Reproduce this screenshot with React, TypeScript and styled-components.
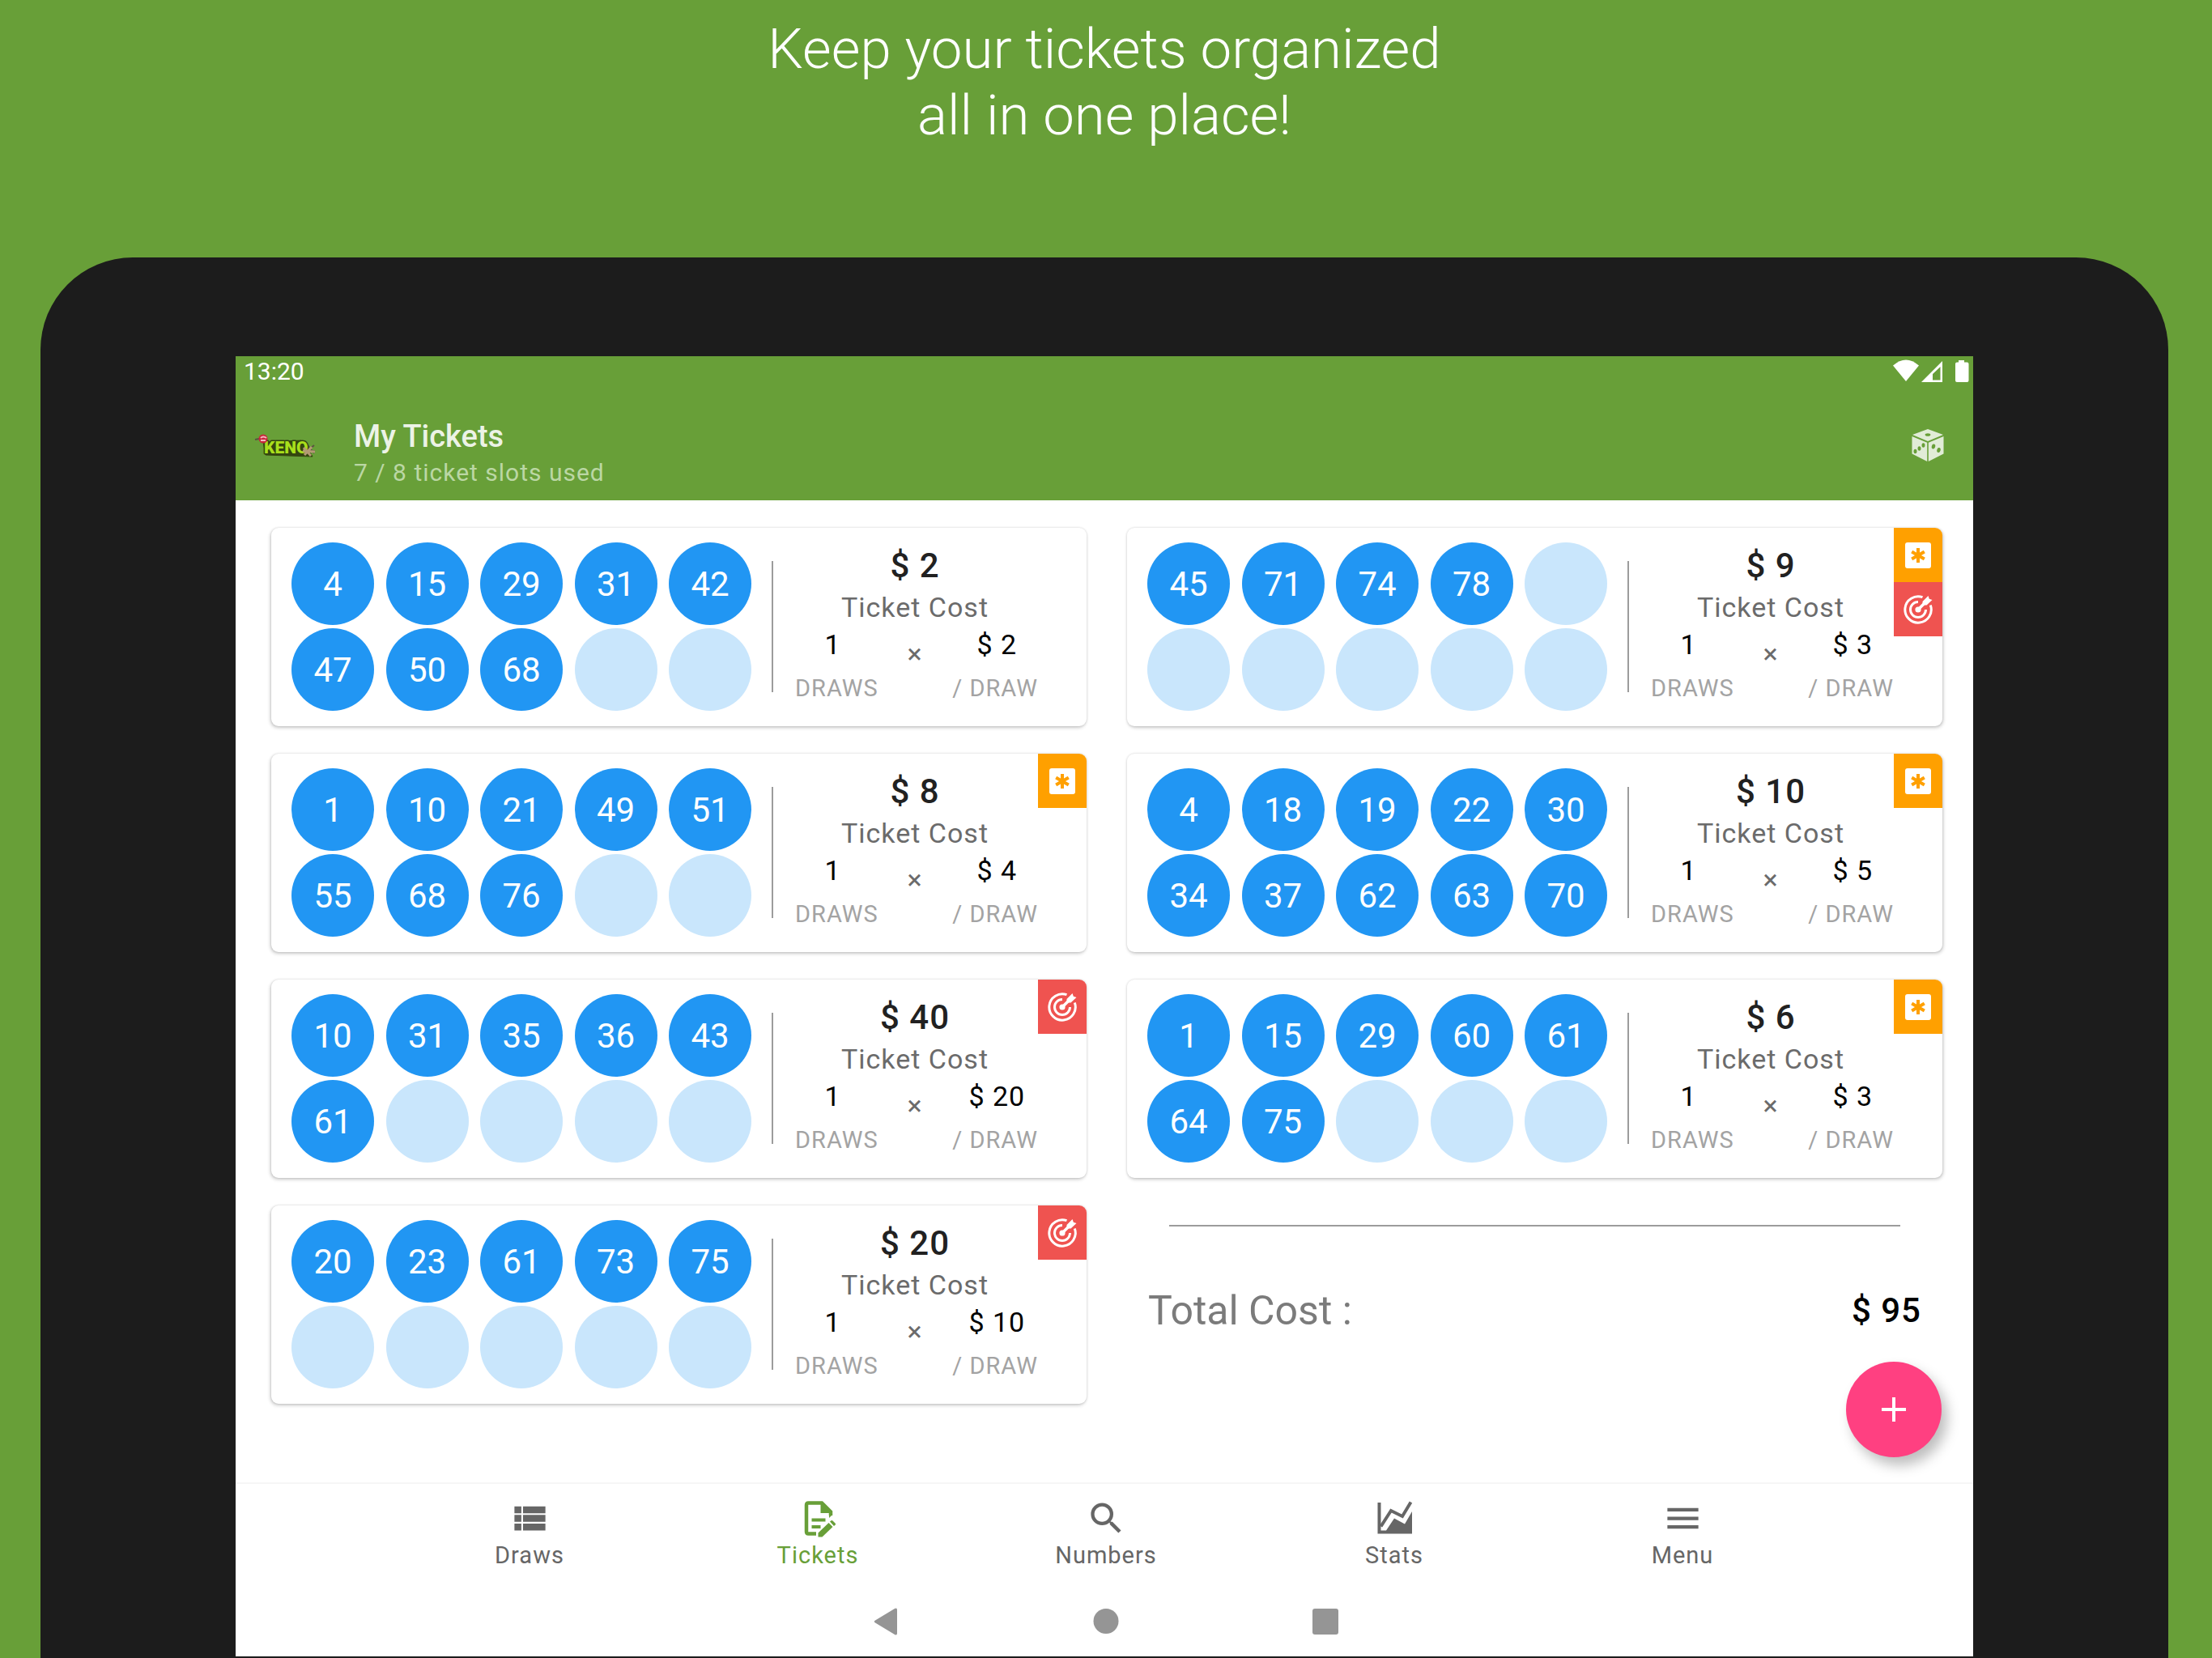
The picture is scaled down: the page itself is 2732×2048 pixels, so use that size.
import React from "react";
import styled, { createGlobalStyle } from "styled-components";
import { MdViewList, MdSearch, MdMenu } from "react-icons/md";

const GlobalStyle = createGlobalStyle`
  * { box-sizing: border-box; }
  body { margin: 0; background: #689f38; font-family: Roboto, "Noto Sans", sans-serif; }
  h1, h2, p, ul { margin: 0; padding: 0; font-weight: inherit; }
  button { border: 0; padding: 0; background: none; font: inherit; color: inherit; }
  svg { display: block; }
`;

const Page = styled.div`
  min-height: 100vh;
  display: flex;
  flex-direction: column;
  background: #689f38;
`;

const Headline = styled.h1`
  height: 318px;
  padding: 20px 54px 0 50px;
  text-align: center;
  color: #fff;
  font-size: 69px;
  font-weight: 300;
  line-height: 82px;
`;

const Tablet = styled.div`
  flex: 1;
  display: flex;
  margin: 0 54px 0 50px;
  padding: 122px 241px 2px;
  border-radius: 114px 114px 0 0;
  background: #1c1c1c;
`;

const Screen = styled.div`
  flex: 1;
  display: flex;
  flex-direction: column;
  background: #fff;
`;

const Header = styled.header`
  background: #689f38;
  color: #fff;
`;

const StatusBar = styled.div`
  display: flex;
  align-items: center;
  justify-content: space-between;
  height: 46px;
  padding: 0 4px 8px 10px;
  font-size: 30px;
  line-height: 38px;
`;

const Toolbar = styled.div`
  display: flex;
  align-items: center;
  height: 132px;
  padding: 0 36px 4px 21px;
`;

const Titles = styled.div`
  flex: 1;
  padding: 20px 0 0 45px;
  display: grid;
  gap: 2px;
`;

const Title = styled.h2`
  color: #ecf3e6;
  font-size: 38px;
  font-weight: 500;
  line-height: 46px;
`;

const Subtitle = styled.p`
  color: #bbd7a4;
  font-size: 30px;
  line-height: 40px;
  letter-spacing: 1px;
`;

const Main = styled.main`
  flex: 1;
  position: relative;
  padding: 34px 38px 0 44px;
`;

const Tickets = styled.div`
  display: grid;
  grid-template-columns: 1fr 1fr;
  gap: 34px 50px;
`;

const Card = styled.article`
  position: relative;
  display: flex;
  align-items: flex-start;
  height: 245px;
  padding: 18px 0 0 25px;
  border-radius: 9px;
  background: #fff;
  box-shadow: 0 0 3px rgba(0, 0, 0, 0.14), -1px 2px 4px rgba(0, 0, 0, 0.2);

  &:nth-child(even) {
    box-shadow: 0 0 3px rgba(0, 0, 0, 0.14), 1px 2px 4px rgba(0, 0, 0, 0.2);
  }
`;

const Numbers = styled.ul`
  display: grid;
  grid-template-columns: repeat(5, 102px);
  justify-content: space-between;
  row-gap: 4px;
  width: 568px;
  list-style: none;
`;

const Ball = styled.li<{ $empty: boolean }>`
  display: flex;
  align-items: center;
  justify-content: center;
  height: 102px;
  padding-top: 2px;
  border-radius: 50%;
  background: ${(p) => (p.$empty ? "#c9e6fc" : "#2196f3")};
  color: #fff;
  font-size: 42px;
  line-height: 50px;
`;

const Divider = styled.div`
  width: 2px;
  height: 162px;
  margin: 23px 25px 0;
  background: #9c9c9c;
`;

const Details = styled.div`
  flex: 1;
  padding: 2px 62px 0 0;
  text-align: center;
`;

const Cost = styled.p`
  color: #212121;
  font-size: 42px;
  font-weight: 500;
  line-height: 54px;
  letter-spacing: 1px;
`;

const CostLabel = styled.p`
  color: #6b6b6b;
  font-size: 34px;
  line-height: 48px;
  letter-spacing: 1px;
`;

const Values = styled.div`
  display: grid;
  grid-template-columns: repeat(3, 1fr);
  column-gap: 4px;
  color: #000;
  font-size: 34px;
  line-height: 44px;
  letter-spacing: 1px;
`;

const Times = styled.span`
  color: #6b6b6b;
  line-height: 66px;
`;

const Units = styled.div`
  display: flex;
  justify-content: space-between;
  margin: 0 -2px 0 2px;
  color: #a3a3a3;
  font-size: 29px;
  line-height: 20px;
  letter-spacing: 1px;
`;

const Badges = styled.div`
  position: absolute;
  top: 0;
  right: 0;
  overflow: hidden;
  border-top-right-radius: 9px;
`;

const Badge = styled.div<{ $color: string }>`
  display: flex;
  align-items: center;
  justify-content: center;
  width: 60px;
  height: 67px;
  background: ${(p) => p.$color};
`;

const Total = styled.section`
  padding: 24px 26px 0 26px;
`;

const TotalRule = styled.div`
  height: 2px;
  margin: 0 26px;
  background: #9c9c9c;
`;

const TotalRow = styled.div`
  display: flex;
  align-items: center;
  justify-content: space-between;
  padding-top: 72px;
  line-height: 64px;
`;

const TotalLabel = styled.span`
  color: #7b7b7b;
  font-size: 50px;
`;

const TotalValue = styled.span`
  color: #000;
  font-size: 42px;
  font-weight: 500;
  letter-spacing: 1px;
`;

const AddButton = styled.button`
  position: absolute;
  right: 39px;
  bottom: 31px;
  display: grid;
  place-items: center;
  width: 118px;
  height: 118px;
  border-radius: 50%;
  background: #ff4081;
  box-shadow: 7px 10px 16px rgba(0, 0, 0, 0.26);
`;

const BottomNav = styled.nav`
  display: flex;
  justify-content: center;
  padding: 17px 0 0 4px;
  border-top: 2px solid #f6f6f6;
`;

const NavLink = styled.a<{ $active: boolean }>`
  display: flex;
  flex-direction: column;
  align-items: center;
  flex: 0 1 356px;
  color: ${(p) => (p.$active ? "#689f38" : "#666")};
  font-size: 29px;
  line-height: 40px;
  letter-spacing: 1px;
  text-decoration: none;
`;

const SystemNav = styled.nav`
  display: flex;
  justify-content: center;
  gap: 220px;
  padding: 36px 0 18px 2px;
`;

const AsteriskIcon = () => (
  <svg width="32" height="32" viewBox="0 0 32 32" aria-hidden="true">
    <rect width="32" height="32" rx="3" fill="#fff" />
    <path d="M16 7v18M8.2 11.5l15.600 9M23.800 11.500l-15.600 9" stroke="#ffa000" strokeWidth="4" />
  </svg>
);

const TargetIcon = () => (
  <svg width="36" height="36" viewBox="0 0 36 36" fill="none" aria-hidden="true">
    <g stroke="#fff" strokeWidth="3">
      <path d="M23.500 2.700A16.200 16.200 0 1 0 33.300 12.500" />
      <path d="M18 8.500A9.500 9.500 0 1 0 27.500 18" />
      <path d="M18 18L28 8" strokeWidth="3.600" />
    </g>
    <circle cx="18" cy="18" r="3.600" fill="#fff" />
    <path d="M23.500 12.500V8L30.500 1l1.300 3.700 3.700 1.300-7 6.500z" fill="#fff" />
  </svg>
);

const TicketIcon = () => (
  <svg width="51" height="51" viewBox="0 0 51 51" fill="none" aria-hidden="true">
    <path
      d="M23 44.500H13.500Q11 44.500 11 42V9Q11 6.500 13.500 6.500H30L41 17.500V22"
      stroke="currentColor"
      strokeWidth="4.500"
    />
    <path d="M28.500 5H31L43 17.500V19H28.500z" fill="currentColor" />
    <path d="M43 17v4l-4 4v-7z" fill="currentColor" />
    <path d="M17.500 27.500h17M17.500 36h11" stroke="currentColor" strokeWidth="4" />
    <path d="M25.500 48.500v-5L38.500 31l5 5-13 12.500z" fill="currentColor" />
    <path d="M40 29.500l1.500-1.200q1-.6 2 .2l3 3q1 1 .2 2L45 35z" fill="currentColor" />
  </svg>
);

const StatsIcon = () => (
  <svg width="51" height="51" viewBox="0 0 51 51" fill="none" aria-hidden="true">
    <path
      d="M4.500 6H8.500V40.500H15L25 25.500L38 32.500L47 17V44.500H4.500z"
      fill="currentColor"
    />
    <path d="M8.500 35.500L21 16L35 23L45.500 5.500" stroke="currentColor" strokeWidth="4" />
  </svg>
);

const KenoLogo = () => (
  <svg width="80" height="34" viewBox="0 0 80 34" role="img" aria-label="Keno">
    <path d="M3 10l10-2M66 25l10-8M68 17l8 10M63 23l14 1" stroke="#5a5342" strokeWidth="2" />
    <path
      d="M13 13L60 11L66 17L74 31L16 29z"
      fill="#34460f"
      stroke="#34460f"
      strokeWidth="1"
      strokeLinejoin="round"
    />
    <text
      x="14"
      y="27"
      fontFamily="Roboto, sans-serif"
      fontSize="21"
      fontWeight="900"
      fill="#a8df1c"
      stroke="#34460f"
      strokeWidth="3"
      paintOrder="stroke"
      strokeLinejoin="round"
    >
      KENO
    </text>
    <path d="M63 20l9 10M73 19l-9 10M62 24l15 1" stroke="#b39a74" strokeWidth="3" />
    <circle cx="13" cy="9" r="5.500" fill="#c8283c" />
    <path d="M10 8q3-3 7 0M10 11h6" stroke="#f3b9bf" strokeWidth="2" fill="none" />
  </svg>
);

const DiceIcon = () => (
  <svg width="40" height="40" viewBox="0 0 40 40" aria-hidden="true">
    <g fill="#e1ecd7">
      <path d="M20 0L39 7L20 15L1 7z" />
      <path d="M0.500 9L19.200 16.800V40L0.500 30.500z" />
      <path d="M39.500 9L20.800 16.800V40L39.500 30.500z" />
    </g>
    <g fill="#689f38">
      <ellipse cx="20" cy="7" rx="3.400" ry="1.800" />
      <ellipse cx="4.500" cy="27.500" rx="2" ry="2.800" />
      <ellipse cx="9.500" cy="24" rx="2" ry="2.800" />
      <ellipse cx="14.500" cy="20" rx="2" ry="2.800" />
      <ellipse cx="27" cy="21.500" rx="2.200" ry="3" transform="rotate(15 27 21.500)" />
      <ellipse cx="33.500" cy="26" rx="2.200" ry="3" transform="rotate(15 33.500 26)" />
    </g>
  </svg>
);

const StatusIcons = () => (
  <svg width="95" height="30" viewBox="0 1 95 30" fill="#fff" aria-hidden="true">
    <path d="M0 8.500Q16-5.500 32 8.500L16 28z" />
    <path fillRule="evenodd" d="M35 29L61 3V29zM49 26.500H58.500V10L49 19z" />
    <path d="M81 2h7v2.500h3.500q2 0 2 2V27q0 2-2 2H79q-2 0-2-2V6.500q0-2 2-2h2z" />
  </svg>
);

type Extra = "bonus" | "bullseye";

interface Ticket {
  numbers: number[];
  cost: number;
  perDraw: number;
  extras: Extra[];
}

const tickets: Ticket[] = [
  { numbers: [4, 15, 29, 31, 42, 47, 50, 68], cost: 2, perDraw: 2, extras: [] },
  { numbers: [45, 71, 74, 78], cost: 9, perDraw: 3, extras: ["bonus", "bullseye"] },
  { numbers: [1, 10, 21, 49, 51, 55, 68, 76], cost: 8, perDraw: 4, extras: ["bonus"] },
  { numbers: [4, 18, 19, 22, 30, 34, 37, 62, 63, 70], cost: 10, perDraw: 5, extras: ["bonus"] },
  { numbers: [10, 31, 35, 36, 43, 61], cost: 40, perDraw: 20, extras: ["bullseye"] },
  { numbers: [1, 15, 29, 60, 61, 64, 75], cost: 6, perDraw: 3, extras: ["bonus"] },
  { numbers: [20, 23, 61, 73, 75], cost: 20, perDraw: 10, extras: ["bullseye"] },
];

const SLOTS = Array.from({ length: 10 }, (_, i) => i);

const TicketCard = ({ ticket }: { ticket: Ticket }) => (
  <Card>
    <Numbers>
      {SLOTS.map((i) => (
        <Ball key={i} $empty={i >= ticket.numbers.length}>
          {ticket.numbers[i]}
        </Ball>
      ))}
    </Numbers>
    <Divider />
    <Details>
      <Cost>$ {ticket.cost}</Cost>
      <CostLabel>Ticket Cost</CostLabel>
      <Values>
        <span>1</span>
        <Times>×</Times>
        <span>$ {ticket.perDraw}</span>
      </Values>
      <Units>
        <span>DRAWS</span>
        <span>/ DRAW</span>
      </Units>
    </Details>
    <Badges>
      {ticket.extras.map((extra) => (
        <Badge key={extra} $color={extra === "bonus" ? "#ffa000" : "#ef5350"}>
          {extra === "bonus" ? <AsteriskIcon /> : <TargetIcon />}
        </Badge>
      ))}
    </Badges>
  </Card>
);

const navItems = [
  { label: "Draws", icon: <MdViewList size={51} /> },
  { label: "Tickets", icon: <TicketIcon /> },
  { label: "Numbers", icon: <MdSearch size={51} /> },
  { label: "Stats", icon: <StatsIcon /> },
  { label: "Menu", icon: <MdMenu size={51} /> },
];

const systemShapes = [
  { label: "Back", shape: <path d="M12 24.500q-2.500 1.500 0 3l24 14.500q3 1.500 3-1.500v-29q0-3-3-1.500z" /> },
  { label: "Home", shape: <circle cx="26" cy="25.500" r="15.500" /> },
  { label: "Recent apps", shape: <rect x="10" y="10" width="32" height="32" rx="3" /> },
];

export default function App() {
  return (
    <Page>
      <GlobalStyle />
      <Headline>
        Keep your tickets organized
        <br />
        all in one place!
      </Headline>
      <Tablet>
        <Screen>
          <Header>
            <StatusBar>
              <span>13:20</span>
              <StatusIcons />
            </StatusBar>
            <Toolbar>
              <KenoLogo />
              <Titles>
                <Title>My Tickets</Title>
                <Subtitle>7 / 8 ticket slots used</Subtitle>
              </Titles>
              <button type="button" aria-label="Quick pick">
                <DiceIcon />
              </button>
            </Toolbar>
          </Header>
          <Main>
            <Tickets>
              {tickets.map((ticket, i) => (
                <TicketCard key={i} ticket={ticket} />
              ))}
              <Total>
                <TotalRule />
                <TotalRow>
                  <TotalLabel>Total Cost :</TotalLabel>
                  <TotalValue>$ 95</TotalValue>
                </TotalRow>
              </Total>
            </Tickets>
            <AddButton type="button" aria-label="Add ticket">
              <svg width="30" height="30" viewBox="0 0 30 30" aria-hidden="true">
                <path d="M15 0v30M0 15h30" stroke="#fff" strokeWidth="4" />
              </svg>
            </AddButton>
          </Main>
          <BottomNav>
            {navItems.map(({ label, icon }) => (
              <NavLink key={label} href="#" $active={label === "Tickets"}>
                {icon}
                {label}
              </NavLink>
            ))}
          </BottomNav>
          <SystemNav>
            {systemShapes.map(({ label, shape }) => (
              <button key={label} type="button" aria-label={label}>
                <svg width="51" height="51" viewBox="0 0 51 51" fill="#959595" aria-hidden="true">
                  {shape}
                </svg>
              </button>
            ))}
          </SystemNav>
        </Screen>
      </Tablet>
    </Page>
  );
}
